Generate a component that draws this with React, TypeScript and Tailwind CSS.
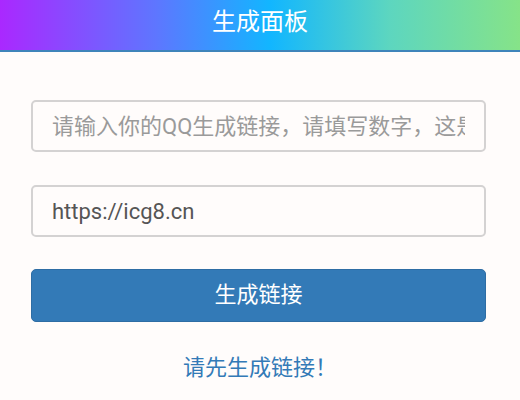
import React from "react";

export default function App() {
  const font = { fontFamily: '"Roboto", "Noto Sans CJK SC", sans-serif' };
  return (
    <div className="w-[520px] h-[400px] bg-[#fffcfb] overflow-hidden" style={font}>
      <div className="h-[52px] border-b-2 border-[#3f84ba] bg-[linear-gradient(90deg,#aa28ff_0%,#5e76ff_30%,#12b6ff_52%,#5dd6bf_75%,#86e388_100%)] flex items-center justify-center">
        <span className="text-white text-[24px] leading-none -mt-[7px]">生成面板</span>
      </div>
      <div className="px-[31px] pt-[48px] flex flex-col">
        <input
          className="h-[52px] w-[455px] rounded-[5px] border-2 border-[#d4d2d2] bg-[#fffcfb] px-[19px] text-[22px] text-[#555] placeholder:text-[#9a9a9a] outline-none"
          placeholder="请输入你的QQ生成链接，请填写数字，这是你接收信息的QQ号"
        />
        <input
          className="mt-[33px] h-[52px] w-[455px] rounded-[5px] border-2 border-[#d4d2d2] bg-[#fffcfb] px-[19px] text-[22px] text-[#555] outline-none"
          defaultValue="https://icg8.cn"
        />
        <button className="mt-[32px] h-[53px] w-[455px] rounded-[5px] border border-[#2e6da4] bg-[#337ab7] text-white text-[22px] leading-none pb-[2px]">
          生成链接
        </button>
        <div className="mt-[35px] text-center text-[#337ab7] text-[22px] leading-none">请先生成链接！</div>
      </div>
    </div>
  );
}
